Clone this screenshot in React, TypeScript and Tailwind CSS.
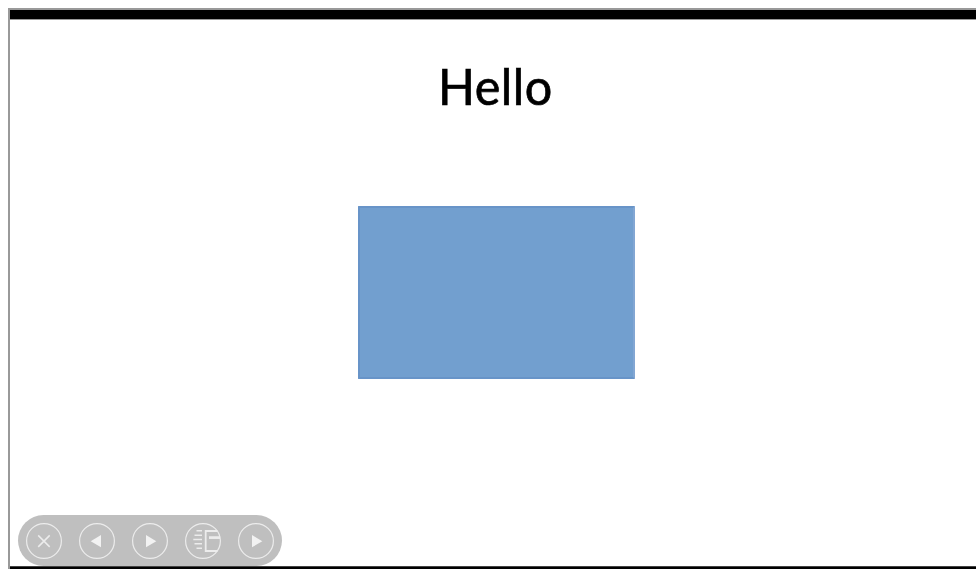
import type { ReactNode } from "react";

function ControlButton({ label, children }: { label: string; children: ReactNode }) {
  return (
    <button aria-label={label} className="size-9 shrink-0">
      <svg viewBox="0 0 36 36" className="size-9" fill="none" stroke="#ececec">
        <circle cx="18" cy="18" r="17.4" strokeWidth="1.2" />
        {children}
      </svg>
    </button>
  );
}

function PlayIcon() {
  return <path d="M14 12v12.3l10.3-6.15z" fill="#f2f2f2" stroke="none" />;
}

function Controls() {
  return (
    <div className="flex h-[51px] w-[264px] items-center gap-[17px] rounded-full bg-[#bfbfbf] pl-2 pt-px">
      <ControlButton label="End show">
        <path d="M12.2 12.4l11.5 11.5M23.7 12.4L12.2 23.9" strokeWidth="1.5" />
      </ControlButton>
      <ControlButton label="Previous">
        <path d="M22 12v12.3l-10.3-6.15z" fill="#f2f2f2" stroke="none" />
      </ControlButton>
      <ControlButton label="Play">
        <PlayIcon />
      </ControlButton>
      <ControlButton label="Slide layout">
        <path
          d="M11.5 7.8H17M9.5 12.2H17M8.3 16.5H17M9.5 20.8H17M11.5 25.2H17"
          strokeWidth="1.5"
        />
        <path d="M32.5 8H20.7V28H32.5" strokeWidth="1.8" />
        <path d="M24 14.6H35" strokeWidth="2.7" />
      </ControlButton>
      <ControlButton label="Next">
        <PlayIcon />
      </ControlButton>
    </div>
  );
}

export default function App() {
  return (
    <div className="h-[569px] w-[976px] overflow-hidden bg-white pl-2 pt-2 font-['Lato',sans-serif]">
      <main className="flex h-[561px] flex-col border-l-2 border-t-2 border-[#999999]">
        <div className="h-[10px] shrink-0 border-b border-[#999999] bg-black" />
        <section className="flex h-[546px] shrink-0 flex-col bg-white">
          <h1 className="ml-[428px] mt-[36px] h-[60px] origin-left scale-x-[0.97] whitespace-nowrap text-[50px] leading-[60px] tracking-[0.5px] text-black [-webkit-text-stroke:0.7px_black]">
            Hello
          </h1>
          <div className="ml-[348px] mt-[90px] h-[173px] w-[277px] rounded-[1px] border-2 border-[#6894c8] border-r-[#82a6d3] bg-[#729fcf]" />
          <div className="ml-2 mt-[136px]">
            <Controls />
          </div>
        </section>
        <div className="grow border-t border-[#444444] bg-black" />
      </main>
    </div>
  );
}
